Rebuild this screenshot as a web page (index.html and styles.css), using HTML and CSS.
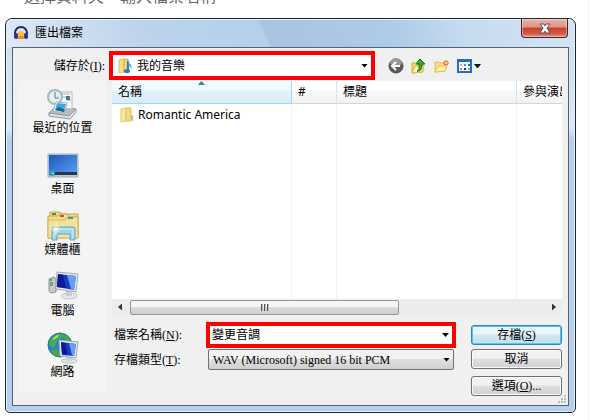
FILE: index.html
```html
<!DOCTYPE html>
<html lang="zh-Hant">
<head>
    <meta charset="UTF-8">
    <meta name="viewport" content="width=device-width, initial-scale=1.0">
    <title>匯出檔案</title>
    <link rel="stylesheet" href="styles.css">
</head>
<body>
    <main class="page">
        <p class="intro">選擇資料夾，輸入檔案名稱。</p>

        <section class="window">
            <header class="titlebar">
                <svg class="app-icon" width="16" height="16" viewBox="0 0 16 16">
                    <path d="M2 9V8a6 6 0 0 1 12 0v1" fill="none" stroke="#19227c" stroke-width="2"/>
                    <path d="M4 8l2-2 1 1 1-2 1 2 1-1 2 2v6H4z" fill="#ffc23a"/>
                    <path d="M5 11h6v3H5z" fill="#f58a1d"/>
                    <rect x="1" y="8" width="4" height="6" rx="2" fill="#2635a5"/>
                    <rect x="11" y="8" width="4" height="6" rx="2" fill="#2635a5"/>
                </svg>
                <h1>匯出檔案</h1>
                <button class="close" aria-label="關閉">
                    <svg width="12" height="11" viewBox="0 0 12 11">
                        <path d="M1 1h4l1 2 1-2h4L8 5l3 5H7L6 8l-1 2H1l3-5z" fill="#f6f6f6" stroke="#545568"/>
                    </svg>
                </button>
            </header>

            <form class="client">
                <div class="lookin">
                    <label for="folder">儲存於<span>(<u>I</u>):</span></label>
                    <div class="combo combo-folder highlight">
                        <svg class="combo-icon" width="15" height="16" viewBox="0 0 15 16">
                            <path d="M1 2l5-1v13l-5 1z" fill="#f5df8e" stroke="#e0c064"/>
                            <path d="M6 1h4v13H6z" fill="#eed27a" stroke="#d9b858"/>
                            <path d="M10 3v9" stroke="#2780b8" stroke-width="2"/>
                            <path d="M10 3c1 3 5 4 3 9 0-3-1-4-3-5z" fill="#3c9fd4"/>
                            <ellipse cx="9" cy="13" rx="3" ry="2" fill="#2780b8"/>
                        </svg>
                        <select id="folder"><option>我的音樂</option></select>
                        <i class="arrow"></i>
                    </div>
                    <div class="tools">
                        <button type="button" aria-label="上一頁">
                            <svg width="16" height="16" viewBox="0 0 16 16">
                                <circle cx="8" cy="8" r="7" fill="#5c5c5c" stroke="#4b4b4b"/>
                                <path d="M2 6a6 6 0 0 1 12 0c-3 2-8 2-12 0z" fill="#999"/>
                                <path d="M8 4L4 8l4 4M4 8h8" fill="none" stroke="#fff" stroke-width="2"/>
                            </svg>
                        </button>
                        <button type="button" aria-label="到上一層">
                            <svg width="16" height="16" viewBox="0 0 16 16">
                                <path d="M1 15V5h4l1 1h6v8z" fill="#f3d36b" stroke="#d8ad3f"/>
                                <path d="M1 15l3-7h9l-2 6z" fill="#fff0a3" stroke="#dfb54d"/>
                                <path d="M6 13c3-1 2-4 2-7H5l4-5 5 5h-3c0 4-1 8-5 7z" fill="#35a92c" stroke="#167516"/>
                            </svg>
                        </button>
                        <button type="button" aria-label="建立新資料夾">
                            <svg width="16" height="16" viewBox="0 0 16 16">
                                <path d="M1 14V4h4l1 1h5v8z" fill="#f8df86" stroke="#e3bd5c"/>
                                <path d="M1 14l3-6h9l-2 5z" fill="#fff0a3" stroke="#e6c163"/>
                                <path d="M12 2v6M9 5h6M10 3l4 4M14 3l-4 4" stroke="#f4512a"/>
                                <circle cx="12" cy="5" r="1" fill="#fff08a"/>
                            </svg>
                        </button>
                        <button type="button" aria-label="檢視">
                            <svg width="24" height="16" viewBox="0 0 24 16">
                                <path d="M1 2h13v12H1z" fill="#fff" stroke="#1671d2" stroke-width="2"/>
                                <path d="M0 1h15v3H0z" fill="#1671d2"/>
                                <path d="M3 6h2v2H3z" fill="#aeb4c4"/><path d="M7 6h2v2H7z" fill="#399bd0"/><path d="M11 6h2v2h-2z" fill="#1c9434"/>
                                <path d="M3 10h2v2H3z" fill="#f06c4b"/><path d="M7 10h2v2H7z" fill="#1b318f"/><path d="M11 10h2v2h-2z" fill="#d99c31"/>
                                <path d="M17 6h7l-3 4h-1z" fill="#111"/>
                            </svg>
                        </button>
                    </div>
                </div>

                <nav class="places">
                    <a href="#">
                        <svg width="32" height="32" viewBox="0 0 32 32">
                            <path d="M2 25l7-7 20 3-7 8-20-3z" fill="#b9bdbf" stroke="#8d9396"/>
                            <path d="M2 25l20 3 7-7v3l-6 7-21-3z" fill="#e2e4e5" stroke="#90969a"/>
                            <path d="M13 4h12v17l-12-1z" fill="#fafafa" stroke="#b5babd"/>
                            <path d="M15 6h8M15 9h4M20 12h4" stroke="#8eb6cf"/>
                            <path d="M19 8h4v4h-4z" fill="#4e7186"/>
                            <circle cx="8" cy="9" r="7" fill="#e2eff3" stroke="#a4b8c0" stroke-width="2"/>
                            <path d="M8 4v6h4" fill="none" stroke="#587784"/>
                            <path d="M9 14l11 1-2 10-12-2z" fill="#fff" stroke="#a2b4bd"/>
                            <path d="M10 15l9 1-2 8-9-2z" fill="#43a5df"/>
                            <path d="M8 22l4-3 6 3-1 2z" fill="#1c6289"/>
                        </svg>
                        最近的位置
                    </a>
                    <a href="#">
                        <svg width="32" height="32" viewBox="0 0 32 32">
                            <defs>
                                <linearGradient id="sky" x1="0" y1="0" x2="1" y2="1">
                                    <stop offset="0" stop-color="#1f57bd"/>
                                    <stop offset="1" stop-color="#5aa0f0"/>
                                </linearGradient>
                            </defs>
                            <path d="M1 5h30v23H1z" fill="#b9cbd8" stroke="#a1b0bb"/>
                            <path d="M2 6h28v20H2z" fill="url(#sky)"/>
                            <path d="M2 23h28v3H2z" fill="#253849"/>
                            <circle cx="5" cy="24" r="3" fill="#289ac4"/>
                            <path d="M4 23h1v1H4z" fill="#f4843b"/><path d="M5 24h2v1H5z" fill="#f5dc52"/>
                        </svg>
                        桌面
                    </a>
                    <a href="#">
                        <svg width="32" height="32" viewBox="0 0 32 32">
                            <path d="M3 2h10l2 2h16v22H3z" fill="#f1d98a" stroke="#c5a44b"/>
                            <path d="M5 3h4v2H5z" fill="#28a23a"/>
                            <path d="M1 6h10l2-2h7l2 3h9v21H1z" fill="#f4dd91" stroke="#cba74d"/>
                            <path d="M13 5h4v2h-4z" fill="#cc4934"/>
                            <path d="M1 10h17l2-3h11v21H1z" fill="#f4e19a" stroke="#d6b65d"/>
                            <path d="M21 7h5v2h-5z" fill="#2a96d4"/>
                            <path d="M5 30V19q0-2 2-2h19q2 0 2 2v11h-5v-6H10v6z" fill="#9ad5ec" stroke="#5aa9cb"/>
                            <path d="M7 28v-9h19v9" fill="none" stroke="#d4f0fa"/>
                            <path d="M9 13v12M4 19h10M6 16l6 6M12 16l-6 6" stroke="#fffbe0"/>
                        </svg>
                        媒體櫃
                    </a>
                    <a href="#">
                        <svg width="32" height="32" viewBox="0 0 32 32">
                            <path d="M2 8l5-2 2 2v13l-5 1-2-2z" fill="#c3c8cb" stroke="#8c9397"/>
                            <path d="M3 8h2v2H3z" fill="#36ba39"/><path d="M3 12h3M3 14h3" stroke="#565e63"/>
                            <ellipse cx="22" cy="25" rx="8" ry="3" fill="#e5e7e8" stroke="#c4c8ca"/>
                            <path d="M19 20h6v5h-6z" fill="#c8ced1"/>
                            <path d="M10 1l21 2-2 18-20-3z" fill="#e4e8ea" stroke="#a4adb2"/>
                            <path d="M11 3l18 2-2 14-17-3z" fill="#173bc2"/>
                            <path d="M20 4l9 1-2 14-3-1z" fill="#6a9ef2"/>
                            <path d="M11 3l5 1 3 13-9-1z" fill="#0a1996"/>
                        </svg>
                        電腦
                    </a>
                    <a href="#">
                        <svg width="32" height="32" viewBox="0 0 32 32">
                            <circle cx="13" cy="13" r="12" fill="#2a83c9" stroke="#2a6f9f"/>
                            <path d="M2 12c1-6 7-11 13-10l-1 4-4 2-1 4-3 4z" fill="#49ae46"/>
                            <path d="M15 1l6 3 3 5-5-1-4-3zM4 18l5-1 4 4-2 4c-4-1-6-3-7-7z" fill="#46a54a"/>
                            <path d="M5 8c3-4 5-5 7-5-2 3-4 4-7 5z" fill="#b9e58e"/>
                            <ellipse cx="22" cy="29" rx="8" ry="2" fill="#e4e6e8" stroke="#c0c4c6"/>
                            <path d="M19 24h6v5h-6z" fill="#ced3d6"/>
                            <path d="M12 8l19 2-2 16-16-2z" fill="#e5e9eb" stroke="#9fa9af"/>
                            <path d="M14 10l15 2-2 12-12-1z" fill="#193dc4"/>
                            <path d="M22 11l7 1-2 12-2-1z" fill="#6b9ef1"/>
                            <path d="M14 10l4 1 3 12-6-1z" fill="#0b1b98"/>
                        </svg>
                        網路
                    </a>
                </nav>

                <div class="files">
                    <table>
                        <colgroup>
                            <col class="col-name">
                            <col class="col-num">
                            <col class="col-title">
                            <col>
                        </colgroup>
                        <thead>
                            <tr>
                                <th class="sorted">名稱</th>
                                <th>#</th>
                                <th>標題</th>
                                <th>參與演出</th>
                            </tr>
                        </thead>
                        <tbody>
                            <tr class="file">
                                <td>
                                    <span class="file-name">
                                        <svg width="14" height="16" viewBox="0 0 14 16">
                                            <path d="M1 2l5-1v13l-5 1z" fill="#f8e79f" stroke="#e2c66a"/>
                                            <path d="M6 1h5v13H6z" fill="#f1da86" stroke="#dfc164"/>
                                            <path d="M11 8h2v6h-2z" fill="#e8cc72"/>
                                            <path d="M12 9v4" stroke="#7fb8cf"/>
                                        </svg>
                                        Romantic America
                                    </span>
                                </td>
                                <td></td>
                                <td></td>
                                <td></td>
                            </tr>
                            <tr>
                                <td></td>
                                <td></td>
                                <td></td>
                                <td></td>
                            </tr>
                        </tbody>
                    </table>
                    <div class="scrollbar">
                        <i class="scroll-left"></i>
                        <div class="track"><div class="thumb"><i></i><i></i><i></i></div></div>
                        <i class="scroll-right"></i>
                    </div>
                </div>

                <div class="fields">
                    <label for="filename">檔案名稱<span>(<u>N</u>):</span></label>
                    <div class="combo combo-name highlight">
                        <input type="text" id="filename" value="變更音調">
                        <i class="arrow"></i>
                    </div>
                    <label for="filetype">存檔類型<span>(<u>T</u>):</span></label>
                    <div class="combo combo-type">
                        <select id="filetype"><option>WAV (Microsoft) signed 16 bit PCM</option></select>
                        <i class="arrow"></i>
                    </div>
                </div>

                <div class="actions">
                    <button type="button" class="btn default">存檔(<u>S</u>)</button>
                    <button type="button" class="btn">取消</button>
                    <button type="button" class="btn options">選項(<u>O</u>)...</button>
                </div>

                <svg class="grip" width="8" height="8" viewBox="0 0 8 8">
                    <path d="M6 0h2v2H6zM3 3h2v2H3zM6 3h2v2H6zM0 6h2v2H0zM3 6h2v2H3zM6 6h2v2H6z" fill="#bfbfbf"/>
                </svg>
            </form>
        </section>
    </main>
</body>
</html>
```

FILE: styles.css
```css
* {
    box-sizing: border-box;
}

body {
    margin: 0;
    background-color: white;
    color: black;
    font-family: "Noto Sans", "Noto Sans CJK TC", sans-serif;
    font-size: 12px;
    line-height: 16px;
}

.page {
    margin-right: 9px;
    padding: 0 12px 8px 5px;
    border-right: 1px solid #f0f0f0;
    overflow: hidden;
}

.intro {
    margin: -14px 0 12px 19px;
    color: #666;
    font-size: 16px;
    line-height: 20px;
}

button,
input,
select {
    margin: 0;
    padding: 0;
    border: none;
    background: none;
    color: black;
    font: inherit;
}

select {
    appearance: none;
}

svg {
    display: block;
    flex: none;
}

/* window frame */
.window {
    padding: 0 6px 6px;
    border: 1px solid #1d2733;
    border-radius: 7px 7px 5px 5px;
    background: linear-gradient(#c9ddf1 0, #dbe8f6 110px, #b5d0ec 120px, #b5d0ec 100%);
    box-shadow: inset 0 0 0 1px #e4f0fb;
}

.titlebar {
    display: flex;
    align-items: center;
    gap: 6px;
    height: 28px;
    margin: 0 -5px;
    padding: 0 6px;
    border-radius: 6px 6px 0 0;
    background: linear-gradient(65deg, #dfeaf6 0, #bcd3ec 25%, #b5d1ec 45%, #a9c4e0 46%, #aecbe8 68%, #c6dbf0 80%, #d5e4f4 100%);
    box-shadow: inset 0 1px #e4f0fb;
}

.titlebar h1 {
    flex: 1;
    margin: 0;
    font-size: 12px;
    font-weight: normal;
}

.close {
    display: flex;
    align-items: center;
    justify-content: center;
    align-self: flex-start;
    width: 47px;
    height: 19px;
    border: 1px solid #45222a;
    border-top: none;
    border-radius: 0 0 4px 4px;
    background: linear-gradient(#e9b4a8 0, #dc9485 45%, #c8402a 50%, #cf5a42 80%, #e4957e 100%);
    box-shadow: inset 0 0 0 1px rgba(255, 255, 255, 0.4);
}

.client {
    position: relative;
    display: grid;
    grid-template-columns: 87px 1fr 91px;
    grid-template-rows: 33px 218px 17px auto;
    column-gap: 6px;
    padding: 0 6px 9px;
    border: 1px solid #56636f;
    background-color: #f0f0f0;
}

label,
.combo-type,
.btn {
    font-family: "Liberation Serif", "Noto Sans CJK TC", serif;
}

/* folder row */
.lookin {
    grid-column: 1 / -1;
    display: flex;
    align-items: center;
    height: 35px;
}

.lookin label {
    width: 90px;
    padding-right: 4px;
    text-align: right;
    white-space: nowrap;
}

.combo {
    position: relative;
    display: flex;
    align-items: center;
    background-color: white;
}

.combo select,
.combo input {
    flex: 1;
    min-width: 0;
    outline: none;
}

.highlight {
    border: 4px solid #f00;
}

.combo-folder {
    flex: 0 1 266px;
    height: 29px;
    padding-left: 5px;
    gap: 4px;
    z-index: 1;
}

.arrow {
    position: absolute;
    right: 3px;
    width: 7px;
    height: 4px;
    background-color: black;
    clip-path: polygon(0 0, 100% 0, 50% 100%);
    pointer-events: none;
}

.tools {
    display: flex;
    gap: 7px;
    padding-left: 13px;
}

/* shortcuts on the left */
.places {
    grid-row: 2 / 5;
    display: flex;
    flex-direction: column;
    gap: 13px;
    height: 312px;
    padding-top: 7px;
    background-color: #f4f4f4;
}

.places a {
    display: flex;
    flex-direction: column;
    align-items: center;
    color: black;
    text-decoration: none;
}

/* file list */
.files {
    grid-column: 2 / -1;
    grid-row: 2 / 4;
    overflow: hidden;
}

.files table {
    width: 100%;
    height: 218px;
    table-layout: fixed;
    border-collapse: separate;
    border-spacing: 0;
    background-color: white;
}

.col-name {
    width: 180px;
}

.col-num {
    width: 45px;
}

.col-title {
    width: 180px;
}

th,
td {
    padding: 0 0 0 6px;
    border-right: 1px solid #e8f1fb;
    text-align: left;
    font-weight: normal;
    white-space: nowrap;
    overflow: hidden;
}

th {
    position: relative;
    height: 23px;
    border-right-color: #dfe0e2;
    border-bottom: 1px solid #d5d5d5;
    background: linear-gradient(white 40%, #f7f8f9 45%, #f1f2f4);
}

th:last-child,
td:last-child {
    border-right: none;
}

th.sorted {
    border-right-color: #96d9f9;
    border-bottom-color: #96d9f9;
    background: linear-gradient(#f2fafd 40%, #e1f2fa 45%, #d8ecf6);
}

th.sorted::after {
    content: "";
    position: absolute;
    top: 0;
    left: 48%;
    width: 7px;
    height: 4px;
    background-color: #3c7fa1;
    clip-path: polygon(50% 0, 100% 100%, 0 100%);
}

.file td {
    height: 22px;
}

.file-name {
    display: flex;
    align-items: center;
    gap: 4px;
    padding-left: 2px;
}

.scrollbar {
    display: flex;
    align-items: center;
    height: 16px;
    padding: 0 6px;
    background-color: #ececec;
}

.scroll-left,
.scroll-right {
    width: 4px;
    height: 7px;
    background-color: #333;
    clip-path: polygon(100% 0, 100% 100%, 0 50%);
}

.scroll-right {
    clip-path: polygon(0 0, 100% 50%, 0 100%);
}

.track {
    flex: 1;
    padding: 0 8px;
}

.thumb {
    display: flex;
    align-items: center;
    justify-content: center;
    gap: 1px;
    width: 65%;
    height: 15px;
    border: 1px solid #979797;
    border-radius: 2px;
    background: linear-gradient(#f5f5f5 45%, #dcdcdc 50%, #cfcfcf);
}

.thumb i {
    width: 2px;
    height: 7px;
    border-left: 1px solid #555;
    background-color: #bbb;
}

/* file name and type */
.fields {
    grid-column: 2;
    grid-row: 4;
    display: grid;
    grid-template-columns: 92px minmax(0, 250px);
    align-content: start;
    align-items: center;
    row-gap: 1px;
    padding: 6px 0 0 2px;
}

.combo-name {
    height: 26px;
    padding-left: 2px;
}

.combo-type {
    height: 21px;
    margin: 0 2px;
    padding-left: 4px;
    border: 1px solid #707070;
    border-radius: 2px;
    background: linear-gradient(#f2f2f2 45%, #dfdfdf 50%, #d0d0d0);
}

/* buttons */
.actions {
    grid-column: 3;
    grid-row: 4;
    display: flex;
    flex-direction: column;
    gap: 4px;
    padding-top: 9px;
}

.btn {
    height: 20px;
    border: 1px solid #707070;
    border-radius: 3px;
    background: linear-gradient(#f2f2f2 45%, #dfdfdf 50%, #d0d0d0);
    box-shadow: inset 0 0 0 1px #fafafa;
    line-height: 16px;
}

.btn.default {
    border-color: #3c7fb1;
    background: linear-gradient(#eaf4f9 45%, #d3e7f1 50%, #c6dfec);
    box-shadow: inset 0 0 0 1px #3fd0f8;
}

.btn.options {
    margin-top: 3px;
}

.grip {
    position: absolute;
    right: 2px;
    bottom: 2px;
}
```
